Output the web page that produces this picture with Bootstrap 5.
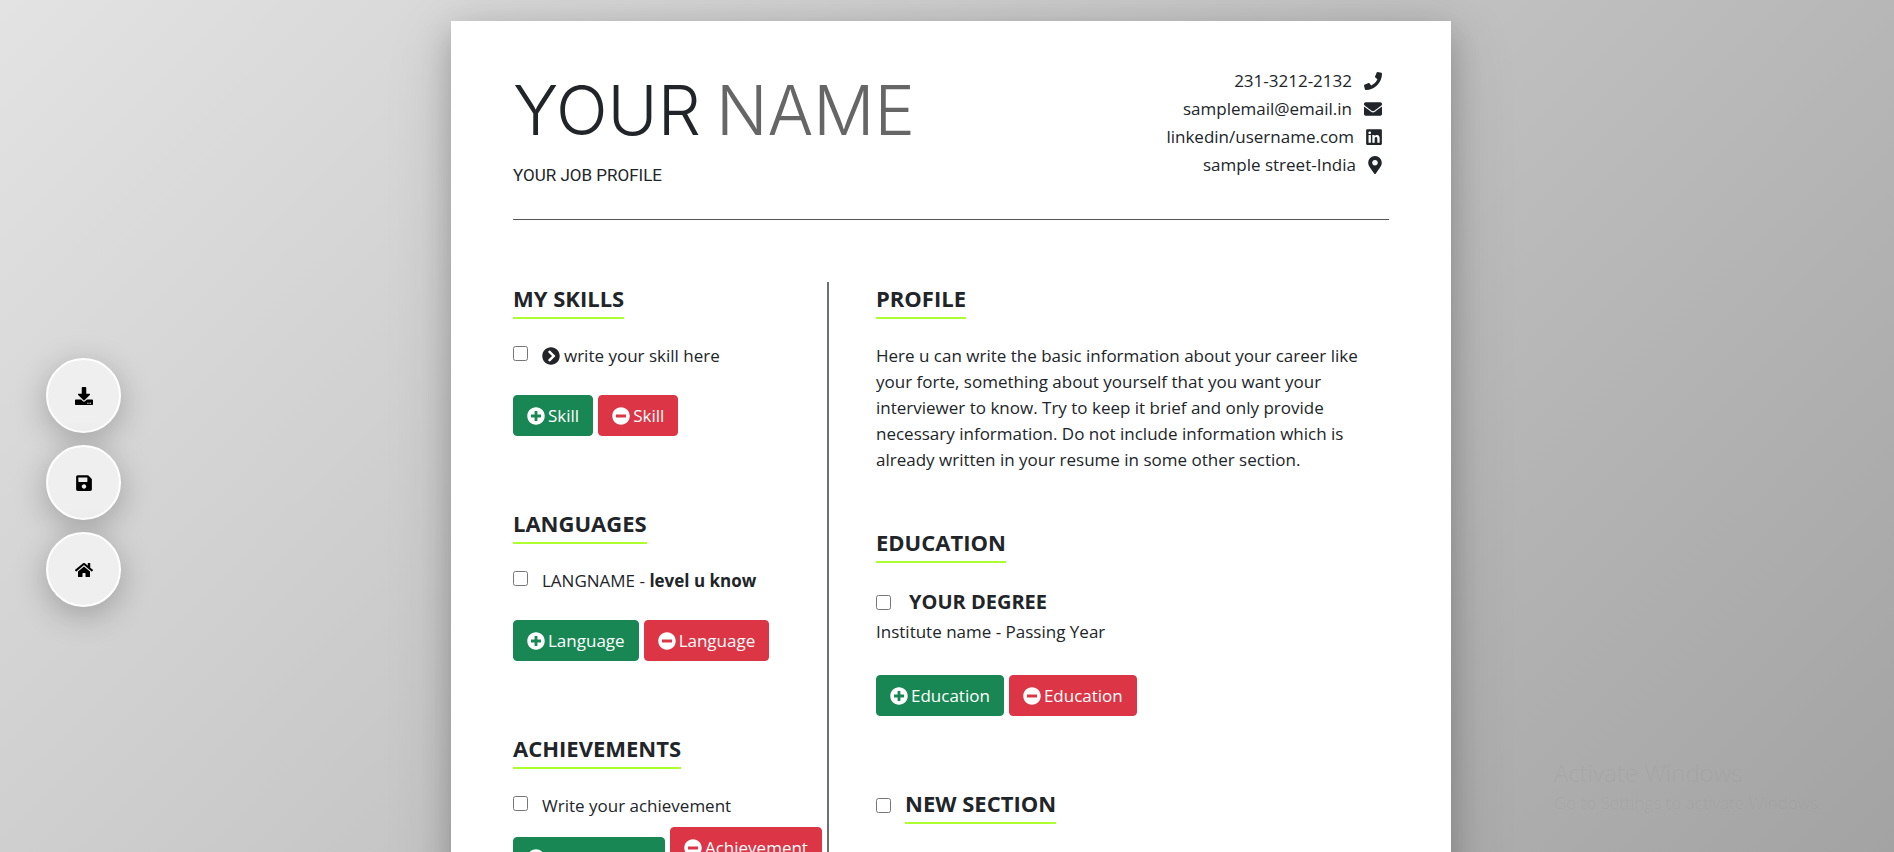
<!DOCTYPE html>
<html lang="en">
<head>
<meta charset="utf-8">
<meta name="viewport" content="width=device-width, initial-scale=1">
<title>Resume Builder</title>
<link href="https://cdn.jsdelivr.net/npm/bootstrap@5.3.0/dist/css/bootstrap.min.css" rel="stylesheet">
<style>
  body { font-family: "Open Sans", "Noto Sans", sans-serif; font-size: 17px; line-height: 26px; color: #212529; background: linear-gradient(135deg, #e3e3e3, #a3a3a3) fixed; }
  .desk { height: 100vh; overflow-y: auto; scrollbar-width: none; padding: 21px 0 40px 8px; }
  .desk::-webkit-scrollbar { display: none; }
  .sheet { max-width: 1000px; padding: 42px 62px 62px; background: #fff; box-shadow: 0 12px 64px rgba(0,0,0,.14), 0 12px 28px rgba(0,0,0,.2); }
  .sheet-head { border-bottom: 1px solid #555; min-height: 157px; margin-bottom: 62px; }
  .full-name { font-family: Inter, sans-serif; font-size: 68px; font-weight: 300; line-height: 84px; margin-top: 5px; }
  .full-name span { color: #666; margin-left: -4px; }
  .job { font-family: Roboto, sans-serif; margin-top: 10px; }
  .contact { padding: 4px 7px 0 0; }
  .contact li { line-height: 28px; display: flex; justify-content: flex-end; align-items: center; gap: 12px; }
  .glyph { width: 18px; height: 18px; fill: currentColor; flex: none; }
  .glyph-square { width: 16px; }
  .glyph-narrow { width: 14px; }
  .left-col { width: 316px; border-right: 2px solid #6c7075; }
  .right-col { padding-left: 47px; }
  .heading { font-size: 22px; font-weight: 700; line-height: 33px; padding-bottom: 2px; border-bottom: 2px solid #adff2f; display: inline-block; vertical-align: top; margin: 0; }
  .block { margin-bottom: 71px; }
  .block-text { margin-bottom: 53px; }
  .entry { margin: 24px 0 0; }
  .tick { width: 15px; height: 15px; margin: 3px 14px 0 0; flex: none; }
  .actions { margin-top: 26px; gap: 5px; }
  .actions-tight { margin-top: 18px; }
  .raised { margin-top: -10px; margin-bottom: 10px; }
  .btn { --bs-btn-font-size: 17px; --bs-btn-padding-x: 13px; --bs-btn-padding-y: 7px; --bs-btn-border-radius: 4px; --bs-btn-line-height: 25px; display: inline-flex; align-items: center; gap: 3px; }
  .degree-row { margin-top: 26px; gap: 18px; }
  .degree { font-size: 20px; font-weight: 700; }
  .school { margin: 4px 0 30px; }
  .side-tools { left: 46px; top: 358px; gap: 12px; z-index: 5; }
  .round { width: 75px; height: 75px; border: 2px solid #fff; background: #efefef; box-shadow: 0 8px 32px rgba(0,0,0,.25); color: #000; }
  .notice { right: 50px; bottom: 36px; width: 290px; font-weight: 300; color: rgba(0,0,0,.03); pointer-events: none; }
  .notice strong { font-size: 24px; line-height: 34px; font-weight: 300; }
</style>
</head>
<body>
<svg class="d-none" xmlns="http://www.w3.org/2000/svg">
  <symbol id="phone" viewBox="0 0 512 512"><path d="M493.400 24.600l-104-24c-11.300-2.600-22.900 3.300-27.500 13.900l-48 112c-4.200 9.800-1.400 21.300 6.900 28l60.600 49.600c-36 76.700-98.900 140.500-177.200 177.200l-49.600-60.600c-6.800-8.300-18.200-11.100-28-6.900l-112 48C3.900 366.500-2 378.100.6 389.400l24 104C27.100 504.200 36.700 512 48 512c256.100 0 464-207.500 464-464 0-11.200-7.700-20.900-18.600-23.400z"/></symbol>
  <symbol id="mail" viewBox="0 0 512 512"><path d="M502.300 190.800c3.900-3.100 9.700-.2 9.700 4.700V400c0 26.500-21.500 48-48 48H48c-26.500 0-48-21.500-48-48V195.600c0-5 5.700-7.800 9.700-4.700 22.400 17.400 52.100 39.500 154.100 113.600 21.100 15.400 56.700 47.800 92.200 47.600 35.700.3 72-32.800 92.300-47.600 102-74.100 131.600-96.300 154-113.700zM256 320c23.200.4 56.600-29.200 73.400-41.400 132.700-96.300 142.800-104.700 173.400-128.700 5.800-4.500 9.200-11.500 9.200-18.900v-19c0-26.500-21.500-48-48-48H48c-26.500 0-48 21.500-48 48v19c0 7.400 3.400 14.300 9.200 18.900 30.600 23.900 40.700 32.400 173.400 128.700 16.800 12.200 50.200 41.800 73.400 41.400z"/></symbol>
  <symbol id="linkedin" viewBox="0 0 448 512"><path d="M416 32H31.900C14.300 32 0 46.500 0 64.300v383.400C0 465.500 14.300 480 31.900 480H416c17.600 0 32-14.500 32-32.300V64.300c0-17.800-14.400-32.300-32-32.300zM135.400 416H69V202.200h66.500V416zm-33.200-243c-21.300 0-38.500-17.300-38.500-38.500S80.900 96 102.200 96c21.200 0 38.500 17.300 38.500 38.500 0 21.300-17.200 38.500-38.500 38.500zm282.100 243h-66.400V312c0-24.800-.5-56.700-34.500-56.700-34.600 0-39.900 27-39.900 54.900V416h-66.400V202.200h63.700v29.200h.9c8.900-16.800 30.600-34.500 62.900-34.500 67.200 0 79.700 44.300 79.700 101.900V416z"/></symbol>
  <symbol id="pin" viewBox="0 0 384 512"><path d="M172.300 501.700C27 291 0 269.400 0 192 0 86 86 0 192 0s192 86 192 192c0 77.400-27 99-172.300 309.700-9.500 13.800-29.900 13.800-39.400 0zM192 272c44.200 0 80-35.800 80-80s-35.800-80-80-80-80 35.800-80 80 35.800 80 80 80z"/></symbol>
  <symbol id="chevron" viewBox="0 0 512 512"><path fill-rule="evenodd" d="M256 8c137 0 248 111 248 248S393 504 256 504 8 393 8 256 119 8 256 8zm113.900 231L234.400 103.500c-9.400-9.400-24.600-9.400-33.900 0l-17 17c-9.400 9.400-9.400 24.600 0 33.900L285.100 256 183.500 357.600c-9.400 9.400-9.400 24.600 0 33.900l17 17c9.400 9.400 24.600 9.400 33.900 0L369.900 273c9.400-9.400 9.400-24.600 0-34z"/></symbol>
  <symbol id="plus" viewBox="0 0 512 512"><path d="M256 8C119 8 8 119 8 256s111 248 248 248 248-111 248-248S393 8 256 8zm144 276c0 6.600-5.400 12-12 12h-92v92c0 6.600-5.400 12-12 12h-56c-6.600 0-12-5.400-12-12v-92h-92c-6.600 0-12-5.400-12-12v-56c0-6.600 5.400-12 12-12h92v-92c0-6.600 5.400-12 12-12h56c6.600 0 12 5.400 12 12v92h92c6.600 0 12 5.400 12 12v56z"/></symbol>
  <symbol id="minus" viewBox="0 0 512 512"><path d="M256 8C119 8 8 119 8 256s111 248 248 248 248-111 248-248S393 8 256 8zM124 296c-6.600 0-12-5.400-12-12v-56c0-6.600 5.400-12 12-12h264c6.600 0 12 5.400 12 12v56c0 6.600-5.400 12-12 12H124z"/></symbol>
  <symbol id="download" viewBox="0 0 512 512"><path d="M216 0h80c13.300 0 24 10.700 24 24v168h87.700c17.800 0 26.700 21.500 14.100 34.100L269.700 378.300c-7.500 7.500-19.800 7.500-27.300 0L90.100 226.100c-12.600-12.600-3.700-34.100 14.100-34.100H192V24c0-13.300 10.700-24 24-24zm296 376v112c0 13.300-10.700 24-24 24H24c-13.300 0-24-10.700-24-24V376c0-13.300 10.700-24 24-24h146.700l49 49c20.100 20.100 52.500 20.100 72.600 0l49-49H488c13.300 0 24 10.700 24 24zm-124 88c0-11-9-20-20-20s-20 9-20 20 9 20 20 20 20-9 20-20zm64 0c0-11-9-20-20-20s-20 9-20 20 9 20 20 20 20-9 20-20z"/></symbol>
  <symbol id="save" viewBox="0 0 448 512"><path d="M433.900 129.900l-83.900-83.900A48 48 0 0 0 316.100 32H48C21.500 32 0 53.500 0 80v352c0 26.500 21.500 48 48 48h352c26.500 0 48-21.500 48-48V163.900a48 48 0 0 0-14.100-34zM224 416c-35.300 0-64-28.700-64-64s28.700-64 64-64 64 28.700 64 64-28.700 64-64 64zm96-304.500V212c0 6.600-5.400 12-12 12H76c-6.600 0-12-5.400-12-12V108c0-6.600 5.400-12 12-12h228.500c3.200 0 6.200 1.300 8.500 3.500l3.500 3.500A12 12 0 0 1 320 111.500z"/></symbol>
  <symbol id="home" viewBox="0 0 576 512"><path d="M280.400 148.300L96 300.100V464a16 16 0 0 0 16 16l112.100-.3a16 16 0 0 0 15.900-16V368a16 16 0 0 1 16-16h64a16 16 0 0 1 16 16v95.600a16 16 0 0 0 16 16.100L464 480a16 16 0 0 0 16-16V300L295.700 148.300a12.200 12.200 0 0 0-15.300 0zM571.600 251.500L488 182.600V44.100a12 12 0 0 0-12-12h-56a12 12 0 0 0-12 12v72.600L318.500 43a48 48 0 0 0-61 0L4.300 251.500a12 12 0 0 0-1.600 16.900l25.500 31a12 12 0 0 0 16.900 1.600l235.200-193.700a12.200 12.200 0 0 1 15.300 0L530.900 301a12 12 0 0 0 16.900-1.600l25.500-31a12 12 0 0 0-1.700-16.900z"/></symbol>
</svg>

<nav class="side-tools position-fixed d-flex flex-column" aria-label="Resume tools">
  <button class="round rounded-circle d-flex align-items-center justify-content-center p-0" type="button" aria-label="Download"><svg class="glyph"><use href="#download"/></svg></button>
  <button class="round rounded-circle d-flex align-items-center justify-content-center p-0" type="button" aria-label="Save"><svg class="glyph"><use href="#save"/></svg></button>
  <button class="round rounded-circle d-flex align-items-center justify-content-center p-0" type="button" aria-label="Home"><svg class="glyph"><use href="#home"/></svg></button>
</nav>

<div class="desk">
  <main class="sheet mx-auto">
    <header class="sheet-head d-flex justify-content-between">
      <div>
        <h1 class="full-name mb-0">YOUR <span>NAME</span></h1>
        <p class="job mb-0">YOUR JOB PROFILE</p>
      </div>
      <ul class="contact list-unstyled mb-0">
        <li>231-3212-2132 <svg class="glyph"><use href="#phone"/></svg></li>
        <li>samplemail@email.in <svg class="glyph"><use href="#mail"/></svg></li>
        <li>linkedin/username.com <svg class="glyph glyph-square"><use href="#linkedin"/></svg></li>
        <li>sample street-India <svg class="glyph glyph-narrow"><use href="#pin"/></svg></li>
      </ul>
    </header>

    <div class="d-flex">
      <div class="left-col flex-shrink-0">
        <section class="block">
          <h2 class="heading">MY SKILLS</h2>
          <div class="entry d-flex">
            <input class="tick" type="checkbox" id="skill1">
            <label class="d-flex align-items-center gap-1" for="skill1"><svg class="glyph"><use href="#chevron"/></svg>write your skill here</label>
          </div>
          <div class="actions d-flex">
            <button class="btn btn-success" type="button"><svg class="glyph"><use href="#plus"/></svg>Skill</button>
            <button class="btn btn-danger" type="button"><svg class="glyph"><use href="#minus"/></svg>Skill</button>
          </div>
        </section>
        <section class="block">
          <h2 class="heading">LANGUAGES</h2>
          <div class="entry d-flex">
            <input class="tick" type="checkbox" id="lang1">
            <label for="lang1">LANGNAME - <b>level u know</b></label>
          </div>
          <div class="actions d-flex">
            <button class="btn btn-success" type="button"><svg class="glyph"><use href="#plus"/></svg>Language</button>
            <button class="btn btn-danger" type="button"><svg class="glyph"><use href="#minus"/></svg>Language</button>
          </div>
        </section>
        <section class="block">
          <h2 class="heading">ACHIEVEMENTS</h2>
          <div class="entry d-flex">
            <input class="tick" type="checkbox" id="ach1">
            <label for="ach1">Write your achievement</label>
          </div>
          <div class="actions actions-tight d-flex">
            <button class="btn btn-success" type="button"><svg class="glyph"><use href="#plus"/></svg>Achievement</button>
            <button class="btn btn-danger raised" type="button"><svg class="glyph"><use href="#minus"/></svg>Achievement</button>
          </div>
        </section>
      </div>

      <div class="right-col">
        <section class="block-text">
          <h2 class="heading">PROFILE</h2>
          <p class="entry">Here u can write the basic information about your career like your forte, something about yourself that you want your interviewer to know. Try to keep it brief and only provide necessary information. Do not include information which is already written in your resume in some other section.</p>
        </section>
        <section class="block">
          <h2 class="heading">EDUCATION</h2>
          <div class="degree-row d-flex align-items-center">
            <input class="tick m-0" type="checkbox" id="edu1">
            <label class="degree" for="edu1">YOUR DEGREE</label>
          </div>
          <p class="school">Institute name - Passing Year</p>
          <div class="actions d-flex">
            <button class="btn btn-success" type="button"><svg class="glyph"><use href="#plus"/></svg>Education</button>
            <button class="btn btn-danger" type="button"><svg class="glyph"><use href="#minus"/></svg>Education</button>
          </div>
        </section>
        <section class="block d-flex align-items-center">
          <input class="tick mt-0" type="checkbox" id="new1">
          <label for="new1" class="heading">NEW SECTION</label>
        </section>
      </div>
    </div>
  </main>
</div>

<aside class="notice position-fixed text-nowrap">
  <strong class="d-block">Activate Windows</strong>
  Go to Settings to activate Windows.
</aside>
<script src="https://cdn.jsdelivr.net/npm/bootstrap@5.3.0/dist/js/bootstrap.bundle.min.js"></script>
</body>
</html>
